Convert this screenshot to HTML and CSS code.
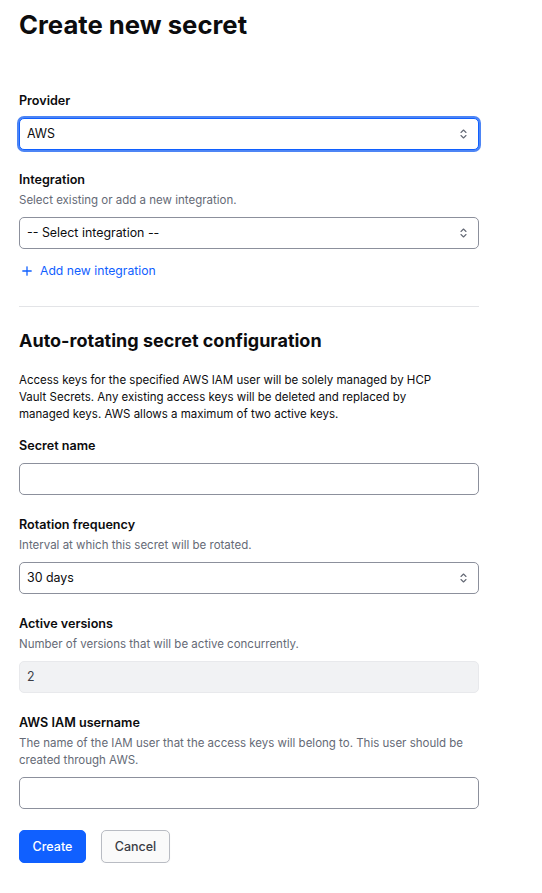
FILE: index.html
```html
<!DOCTYPE html>
<html lang="en">
<head>
<meta charset="utf-8">
<title>Create new secret</title>
<link rel="stylesheet" href="styles.css">
</head>
<body>
<main class="page">
  <h1 class="title">Create new secret</h1>

  <form class="form">
    <div class="field">
      <label class="label">Provider</label>
      <div class="select is-focused">
        <span class="select-value">AWS</span>
        <svg class="chev" width="7" height="10" viewBox="0 0 7 10" fill="none" stroke="#656a76" stroke-width="1.1" stroke-linecap="round" stroke-linejoin="round"><path d="M1 3.5 L3.5 1 L6 3.5"/><path d="M1 6.5 L3.5 9 L6 6.5"/></svg>
      </div>
    </div>

    <div class="field">
      <label class="label">Integration</label>
      <div class="helper">Select existing or add a new integration.</div>
      <div class="select">
        <span class="select-value">-- Select integration --</span>
        <svg class="chev" width="7" height="10" viewBox="0 0 7 10" fill="none" stroke="#656a76" stroke-width="1.1" stroke-linecap="round" stroke-linejoin="round"><path d="M1 3.5 L3.5 1 L6 3.5"/><path d="M1 6.5 L3.5 9 L6 6.5"/></svg>
      </div>
      <a class="add-link" href="#">
        <svg width="10" height="10" viewBox="0 0 10 10" fill="none" stroke="#1060ff" stroke-width="1.3" stroke-linecap="round"><path d="M5 0.8 V9.2"/><path d="M0.8 5 H9.2"/></svg>
        <span>Add new integration</span>
      </a>
    </div>

    <hr class="divider">

    <h2 class="section-title">Auto-rotating secret configuration</h2>
    <p class="intro">Access keys for the specified AWS IAM user will be solely managed by HCP Vault Secrets. Any existing access keys will be deleted and replaced by managed keys. AWS allows a maximum of two active keys.</p>

    <div class="field field-first">
      <label class="label">Secret name</label>
      <div class="input"></div>
    </div>

    <div class="field">
      <label class="label">Rotation frequency</label>
      <div class="helper">Interval at which this secret will be rotated.</div>
      <div class="select">
        <span class="select-value">30 days</span>
        <svg class="chev" width="7" height="10" viewBox="0 0 7 10" fill="none" stroke="#656a76" stroke-width="1.1" stroke-linecap="round" stroke-linejoin="round"><path d="M1 3.5 L3.5 1 L6 3.5"/><path d="M1 6.5 L3.5 9 L6 6.5"/></svg>
      </div>
    </div>

    <div class="field">
      <label class="label">Active versions</label>
      <div class="helper">Number of versions that will be active concurrently.</div>
      <div class="input is-disabled"><span class="select-value is-muted">2</span></div>
    </div>

    <div class="field">
      <label class="label">AWS IAM username</label>
      <div class="helper">The name of the IAM user that the access keys will belong to. This user should be created through AWS.</div>
      <div class="input"></div>
    </div>

    <div class="actions">
      <button type="button" class="btn btn-primary">Create</button>
      <button type="button" class="btn btn-secondary">Cancel</button>
    </div>
  </form>
</main>
</body>
</html>
```

FILE: styles.css
```css
* { box-sizing: border-box; }

html, body {
  margin: 0;
  padding: 0;
  background: #ffffff;
}

body {
  font-family: Inter, "Liberation Sans", Arial, sans-serif;
  color: #0c0c0e;
  -webkit-font-smoothing: antialiased;
}

.page {
  padding: 9px 0 0 19px;
  width: 479px;
}

.title {
  margin: 0;
  font-size: 25.7px;
  line-height: 32px;
  font-weight: 700;
  color: #0c0c0e;
}

.form {
  display: flex;
  flex-direction: column;
  margin-top: 51px;
}

.field {
  display: flex;
  flex-direction: column;
}

.field + .field {
  margin-top: 21px;
}

.field-first {
  margin-top: 14px;
}

.label {
  font-size: 12.6px;
  line-height: 18px;
  font-weight: 600;
  color: #0c0c0e;
}

.helper {
  margin-top: 3px;
  font-size: 11.5px;
  line-height: 17px;
  color: #656a76;
}

.select,
.input {
  margin-top: 8px;
  height: 32px;
  border: 1px solid #8c909c;
  border-radius: 5px;
  background: #ffffff;
  display: flex;
  align-items: center;
  justify-content: space-between;
  padding: 0 11px 0 7px;
}

.select.is-focused {
  border-color: #1060ff;
  box-shadow: 0 0 0 2px #4d85f5;
}

.input.is-disabled {
  background: #f1f2f4;
  border-color: #e8e9ec;
}

.select-value {
  font-size: 12.4px;
  line-height: 18px;
  color: #0c0c0e;
}

.select-value.is-muted {
  color: #3b3d45;
}

.chev {
  display: block;
  flex: none;
}

.add-link {
  margin-top: 13px;
  display: flex;
  align-items: center;
  gap: 8px;
  padding-left: 3px;
  font-size: 12.2px;
  line-height: 18px;
  color: #1060ff;
  text-decoration: none;
}

.divider {
  margin: 26px 0 0 0;
  border: 0;
  height: 1px;
  background: #e3e4e7;
}

.section-title {
  margin: 22px 0 0 0;
  font-size: 18px;
  line-height: 24px;
  font-weight: 700;
  color: #0c0c0e;
}

.intro {
  margin: 19px 0 0 0;
  max-width: 432px;
  font-size: 11.5px;
  line-height: 17px;
  color: #0c0c0e;
}

.actions {
  margin-top: 21px;
  display: flex;
  gap: 15px;
}

.btn {
  height: 33px;
  border-radius: 5px;
  font-family: inherit;
  font-size: 12.5px;
  font-weight: 500;
  padding: 0;
  cursor: pointer;
}

.btn-primary {
  width: 67px;
  background: #1060ff;
  border: 1px solid #1060ff;
  color: #ffffff;
}

.btn-secondary {
  width: 69px;
  background: #fafafa;
  border: 1px solid #b9bcc3;
  color: #3b3d45;
  box-shadow: 0 1px 1px rgba(101, 106, 118, 0.08);
}
```
